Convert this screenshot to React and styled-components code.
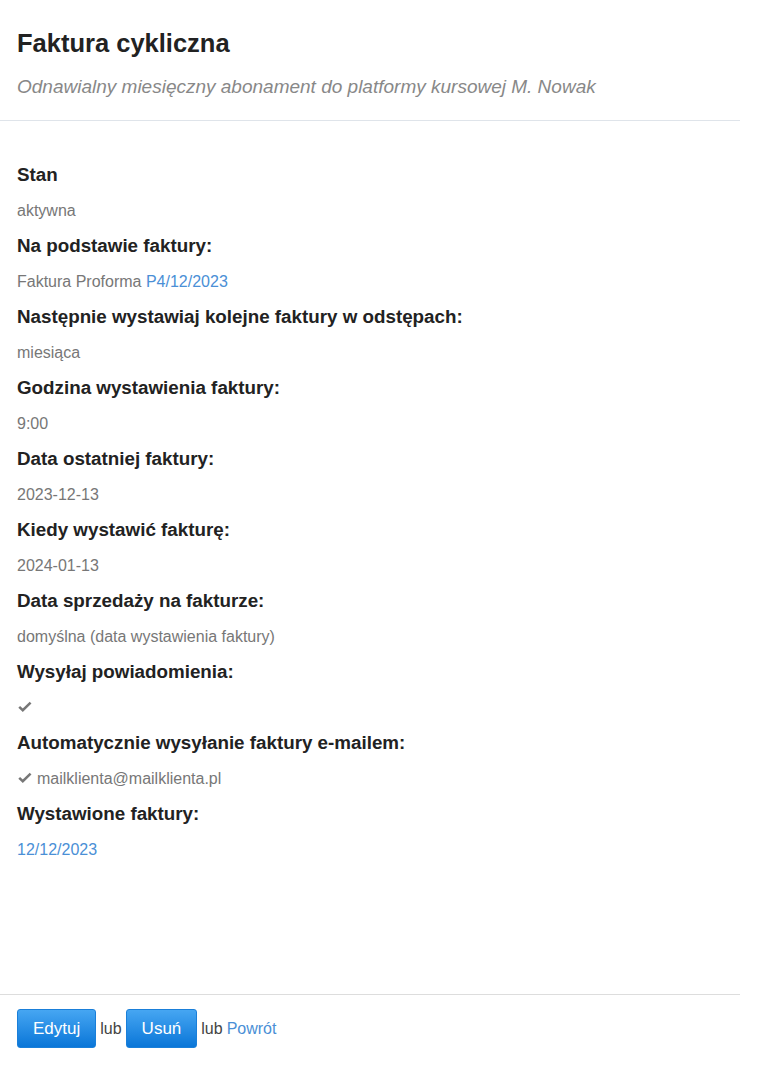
import React from 'react';
import styled, { createGlobalStyle } from 'styled-components';

const GlobalStyle = createGlobalStyle`
  body {
    margin: 0;
    background: #fff;
    font-family: "Liberation Sans", Arial, sans-serif;
  }
`;

const Page = styled.div`
  width: 740px;
  min-height: 1080px;
  display: flex;
  flex-direction: column;
`;

const Header = styled.div`
  padding: 28px 17px 22px;
  border-bottom: 1px solid #dfe4ea;
`;

const Title = styled.h1`
  margin: 0;
  font-size: 25.5px;
  font-weight: bold;
  color: #222;
  line-height: 30px;
`;

const Subtitle = styled.p`
  margin: 18px 0 0;
  font-size: 19px;
  font-style: italic;
  color: #888;
  line-height: 22px;
`;

const Details = styled.dl`
  margin: 0;
  padding: 36px 17px 0;
  flex: 1;
`;

const Label = styled.dt`
  font-size: 18.8px;
  font-weight: bold;
  color: #222;
  line-height: 35.5px;
`;

const Value = styled.dd`
  margin: 0;
  font-size: 16px;
  color: #777;
  line-height: 35.5px;
  height: 35.5px;
`;

const Link = styled.a`
  color: #4a8fd6;
  text-decoration: none;
  cursor: pointer;
`;

const CheckIcon = styled.svg`
  display: inline-block;
  vertical-align: middle;
  margin: -3px 5px 0 1px;
`;

const Check = () => (
  <CheckIcon width="14" height="11" viewBox="0 0 14 11">
    <path d="M1.2 5.8 L4.8 9.2 L12.6 1.6" fill="none" stroke="#777" strokeWidth="2.5" />
  </CheckIcon>
);

const Footer = styled.div`
  border-top: 1px solid #ddd;
  padding: 14px 17px 32px;
  display: flex;
  align-items: center;
  gap: 4px;
  font-size: 16px;
  color: #444;
`;

const Button = styled.button`
  height: 39px;
  padding: 0 15px;
  font-family: inherit;
  font-size: 17px;
  color: #fff;
  border: 1px solid #1a7fd9;
  border-radius: 3px;
  background: linear-gradient(#46a6f2, #0a76d8);
  cursor: pointer;
`;

const items = [
  { label: 'Stan', value: 'aktywna' },
  {
    label: 'Na podstawie faktury:',
    value: (
      <>
        Faktura Proforma <Link>P4/12/2023</Link>
      </>
    ),
  },
  { label: 'Następnie wystawiaj kolejne faktury w odstępach:', value: 'miesiąca' },
  { label: 'Godzina wystawienia faktury:', value: '9:00' },
  { label: 'Data ostatniej faktury:', value: '2023-12-13' },
  { label: 'Kiedy wystawić fakturę:', value: '2024-01-13' },
  { label: 'Data sprzedaży na fakturze:', value: 'domyślna (data wystawienia faktury)' },
  { label: 'Wysyłaj powiadomienia:', value: <Check /> },
  {
    label: 'Automatycznie wysyłanie faktury e-mailem:',
    value: (
      <>
        <Check />
        mailklienta@mailklienta.pl
      </>
    ),
  },
  { label: 'Wystawione faktury:', value: <Link>12/12/2023</Link> },
];

export default function App() {
  return (
    <>
      <GlobalStyle />
      <Page>
        <Header>
          <Title>Faktura cykliczna</Title>
          <Subtitle>Odnawialny miesięczny abonament do platformy kursowej M. Nowak</Subtitle>
        </Header>
        <Details>
          {items.map((item) => (
            <React.Fragment key={item.label}>
              <Label>{item.label}</Label>
              <Value>{item.value}</Value>
            </React.Fragment>
          ))}
        </Details>
        <Footer>
          <Button>Edytuj</Button>
          lub
          <Button>Usuń</Button>
          lub <Link>Powrót</Link>
        </Footer>
      </Page>
    </>
  );
}
